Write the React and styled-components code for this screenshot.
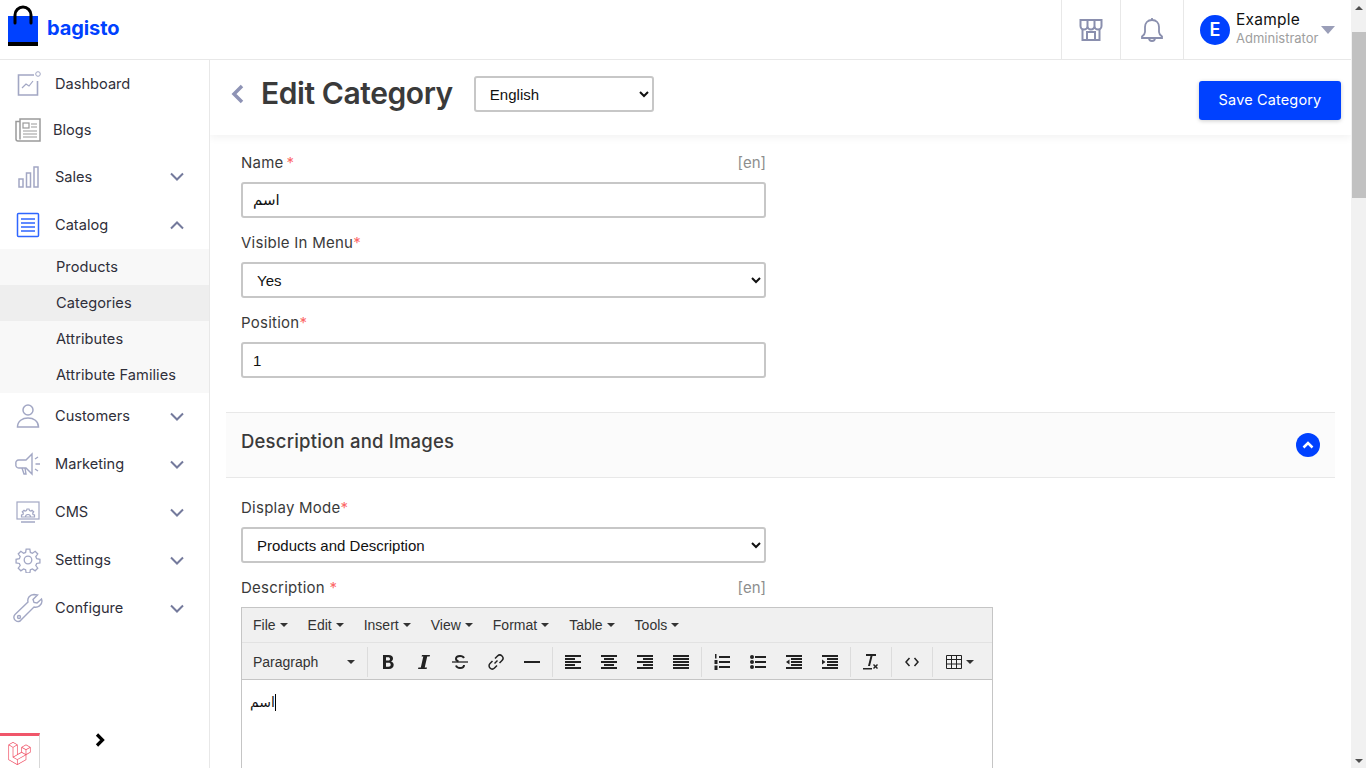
import styled, { createGlobalStyle } from "styled-components";
import { SiLaravel } from "react-icons/si";

const GlobalStyle = createGlobalStyle`
  html, body { margin: 0; height: 100%; overflow: hidden; background: #fff; }
  body { font-family: Inter, "Noto Sans", sans-serif; color: #3a3a3a; }
  * { box-sizing: border-box; }
`;

const Shell = styled.div`
  display: flex;
  width: 1366px;
  height: 768px;
  overflow: hidden;
`;

const Screen = styled.div`
  flex: 1;
  min-width: 0;
  display: flex;
  flex-direction: column;
`;

const TopBar = styled.header`
  height: 60px;
  flex: none;
  display: flex;
  align-items: stretch;
  justify-content: space-between;
  border-bottom: 1px solid #e8e8e8;
`;

const Brand = styled.div`
  display: flex;
  align-items: center;
  gap: 9px;
  padding: 0 0 0 8px;
  margin-top: -9px;
`;

const BrandName = styled.span`
  font-size: 20px;
  font-weight: 700;
  color: #0041ff;
  letter-spacing: -0.1px;
  margin-top: 6px;
`;

const TopActions = styled.div`
  display: flex;
`;

const TopCell = styled.div`
  width: ${(p) => p.$w}px;
  display: flex;
  align-items: center;
  justify-content: center;
  border-left: 1px solid #e8e8e8;
  color: #8a8fae;
`;

const UserCell = styled.div`
  width: 168px;
  display: flex;
  align-items: center;
  padding-left: 16px;
  border-left: 1px solid #e8e8e8;
`;

const Avatar = styled.div`
  width: 30px;
  height: 30px;
  border-radius: 50%;
  background: #0041ff;
  color: #fff;
  font-size: 18px;
  font-weight: 600;
  display: flex;
  align-items: center;
  justify-content: center;
`;

const UserText = styled.div`
  margin-left: 6px;
  width: 85px;
  white-space: nowrap;
`;

const UserName = styled.div`
  font-size: 15.5px;
  line-height: 19px;
  letter-spacing: 0.25px;
  color: #111;
  margin-top: -2px;
`;

const UserRole = styled.div`
  font-size: 13px;
  line-height: 17px;
  margin-top: 1px;
  color: #9e9e9e;
`;

const UserCaret = styled.span`
  width: 0;
  height: 0;
  border-left: 7px solid transparent;
  border-right: 7px solid transparent;
  border-top: 8px solid #9a9eb8;
`;

const Body = styled.div`
  flex: 1;
  min-height: 0;
  display: flex;
`;

const Sidebar = styled.nav`
  width: 210px;
  flex: none;
  display: flex;
  flex-direction: column;
  border-right: 1px solid #e8e8e8;
`;

const NavRow = styled.div`
  height: ${(p) => p.$h || 48}px;
  flex: none;
  display: flex;
  align-items: center;
  padding-left: 13px;
  padding-bottom: ${(p) => (p.$lift ? 2 : 0)}px;
  font-size: 14.6px;
  color: #2f2f3a;
`;

const NavIcon = styled.span`
  width: 30px;
  height: 30px;
  flex: none;
  display: flex;
  align-items: center;
  justify-content: center;
  color: #a2a7c4;
`;

const NavLabel = styled.span`
  margin-left: ${(p) => p.$gap ?? 12}px;
  flex: 1;
`;

const NavChevron = styled.svg`
  width: 14px;
  height: 9px;
  margin-right: 25px;
  color: #747a9c;
`;

const SubMenu = styled.div`
  background: #f8f8f8;
  display: flex;
  flex-direction: column;
`;

const SubItem = styled.div`
  height: 36px;
  display: flex;
  align-items: center;
  padding-left: 56px;
  font-size: 14.6px;
  letter-spacing: 0.05px;
  color: #2f2f3a;
  background: ${(p) => (p.$active ? "#eeeeee" : "transparent")};
`;

const SideFooter = styled.div`
  margin-top: auto;
  height: 35px;
  display: flex;
`;

const LaravelBox = styled.div`
  width: 40px;
  border-top: 3px solid #f0566a;
  border-right: 1px solid #d8d8d8;
  color: #f0566a;
  display: flex;
  align-items: center;
  justify-content: center;
  padding-top: 3px;
`;

const CollapseBox = styled.div`
  width: 120px;
  display: flex;
  justify-content: center;
  color: #000;
`;

const Main = styled.main`
  flex: 1;
  min-width: 0;
  overflow: hidden;
`;

const PageHeader = styled.div`
  height: 75px;
  display: flex;
  justify-content: space-between;
  padding: 16px 10px 0 21px;
  box-shadow: 0 3px 8px rgba(0, 0, 0, 0.05);
`;

const HeaderLeft = styled.div`
  display: flex;
  align-items: flex-start;
`;

const BackLink = styled.svg`
  width: 14px;
  height: 20px;
  margin: 8px 16px 0 0;
  color: #8e93b5;
`;

const Title = styled.h1`
  margin: 0 21px 0 0;
  font-size: 30px;
  line-height: 35px;
  font-weight: 600;
  letter-spacing: -0.42px;
  color: #3a3a3a;
`;

const Field = styled.select`
  display: block;
  width: ${(p) => p.$w || 525}px;
  height: 36px;
  padding: 0 10px;
  background: #fff;
  border: 2px solid #c7c7c7;
  border-radius: 3px;
  font: 15px "Liberation Sans", Arial, sans-serif;
  color: #111;
`;

const TextField = styled.input`
  display: block;
  width: 525px;
  height: 36px;
  padding: 0 10px;
  background: #fff;
  border: 2px solid #c7c7c7;
  border-radius: 3px;
  font: 15px "Liberation Sans", "DejaVu Sans", Arial, sans-serif;
  color: #111;
`;

const SaveButton = styled.button`
  width: 142px;
  height: 39px;
  margin-top: 5px;
  padding-bottom: 4px;
  border: 0;
  border-radius: 3px;
  background: #0041ff;
  color: #fff;
  font: 400 14.5px Inter, sans-serif;
  letter-spacing: 0.15px;
  box-shadow: 0 1px 4px rgba(0, 0, 0, 0.2);
`;

const Form = styled.div`
  padding: 18px 16px 0 16px;
`;

const FieldGroup = styled.div`
  margin: 0 0 15px 15px;
  width: ${(p) => p.$w || 525}px;
`;

const LabelRow = styled.div`
  width: 525px;
  height: 20px;
  margin-bottom: 9px;
  padding-bottom: 2px;
  display: flex;
  justify-content: space-between;
  align-items: center;
  font-size: 15px;
  letter-spacing: 0.25px;
  color: #3a3a3a;
`;

const Star = styled.span`
  color: #fc6868;
  margin-left: ${(p) => p.$gap || 0}px;
`;

const Locale = styled.span`
  color: #8e8e8e;
  letter-spacing: 0;
`;

const SectionHead = styled.div`
  height: 66px;
  margin: 34px 0 20px;
  padding: 0 15px;
  display: flex;
  align-items: center;
  justify-content: space-between;
  background: #fbfbfb;
  border-top: 1px solid #e8e8e8;
  border-bottom: 1px solid #e8e8e8;
`;

const SectionTitle = styled.h2`
  margin: 0 0 8px;
  font-size: 18.5px;
  font-weight: 500;
  letter-spacing: 0.2px;
  color: #3a3a3a;
`;

const Toggle = styled.span`
  width: 24px;
  height: 24px;
  border-radius: 50%;
  background: #0041ff;
  display: flex;
  align-items: center;
  justify-content: center;
`;

const Editor = styled.div`
  width: 752px;
  height: 400px;
  border: 1px solid #c5c5c5;
  font-family: "Liberation Sans", Arial, sans-serif;
  color: #333;
`;

const MenuBar = styled.div`
  height: 35px;
  display: flex;
  align-items: center;
  padding-left: 1px;
  background: #f0f0f0;
  border-bottom: 1px solid #e2e2e2;
`;

const MenuItem = styled.span`
  display: flex;
  align-items: center;
  gap: 4px;
  padding: 0 10px;
  font-size: 14px;
`;

const Caret = styled.i`
  width: 0;
  height: 0;
  border-left: 4px solid transparent;
  border-right: 4px solid transparent;
  border-top: 4px solid #333;
`;

const ToolBar = styled.div`
  height: 37px;
  padding-top: 2px;
  display: flex;
  align-items: center;
  background: #f0f0f0;
  border-bottom: 1px solid #c5c5c5;
`;

const FormatPicker = styled.div`
  width: 123px;
  display: flex;
  align-items: center;
  justify-content: space-between;
  padding: 0 10px 0 11px;
  font-size: 14px;
`;

const ToolSep = styled.span`
  width: 1px;
  height: 30px;
  margin: 0 2px;
  background: #dcdcdc;
`;

const ToolBtn = styled.span`
  width: ${(p) => p.$w || 36}px;
  height: 28px;
  flex: none;
  display: flex;
  align-items: center;
  justify-content: center;
  gap: 4px;
  color: #333;
`;

const EditorText = styled.div`
  padding: 10px 8px;
  font: 14px/24px "Liberation Sans", "DejaVu Sans", sans-serif;
  color: #111;
`;

const TextCursor = styled.span`
  display: inline-block;
  width: 1px;
  height: 17px;
  background: #000;
  vertical-align: -4px;
`;

const ScrollTrack = styled.div`
  width: 15px;
  flex: none;
  display: flex;
  flex-direction: column;
  background: #f1f1f1;
`;

const ScrollArrow = styled.div`
  height: 15px;
  display: flex;
  align-items: center;
  justify-content: center;
  &::after {
    content: "";
    border-left: 4px solid transparent;
    border-right: 4px solid transparent;
    ${(p) => (p.$down ? "border-top: 4px solid #505050;" : "border-bottom: 4px solid #505050;")}
  }
`;

const ScrollThumb = styled.div`
  height: 166px;
  margin: 17px 0 0 1px;
  background: #c1c1c1;
`;

const ScrollSpace = styled.div`
  flex: 1;
`;

const Line = ({ d, w = 1.5 }) => <path d={d} fill="none" stroke="currentColor" strokeWidth={w} />;

const BagLogo = () => (
  <svg width="30" height="41" viewBox="0 0 30 41">
    <rect x="0" y="11" width="30" height="30" fill="#0041ff" />
    <rect x="0" y="37" width="30" height="4" fill="#000" />
    <path d="M7 18V10a8 8 0 0 1 16 0v8" fill="none" stroke="#000" strokeWidth="3" strokeLinecap="round" />
  </svg>
);

const icons = {
  dashboard: (
    <svg width="26" height="26" viewBox="0 0 26 26">
      <Line d="M19 4H3.500v20h19V10" w={1.6} />
      <circle cx="23" cy="3" r="2.300" fill="none" stroke="currentColor" />
      <Line d="M7 17l4-4 3 2 4-5" w={1.200} />
    </svg>
  ),
  blogs: (
    <svg width="26" height="26" viewBox="0 0 26 26" stroke="#9a9a9a" fill="none">
      <path d="M5 4.500V2h20v22H3a2 2 0 0 1-2-2V4.500h4v18" strokeWidth="1.500" />
      <rect x="8" y="6" width="6" height="5" strokeWidth="1.200" />
      <path d="M16 7h6M16 10h6M8 14h14M8 17h14M8 20h14" strokeWidth="1.200" />
    </svg>
  ),
  sales: (
    <svg width="24" height="24" viewBox="0 0 24 24" fill="none" stroke="currentColor" strokeWidth="1.500">
      <rect x="3" y="14" width="4" height="8" />
      <rect x="10.500" y="8" width="4" height="14" />
      <rect x="18" y="2" width="4" height="20" />
    </svg>
  ),
  catalog: (
    <svg width="24" height="26" viewBox="0 0 24 26" fill="none" stroke="#2f66ff" strokeWidth="1.500">
      <rect x="1.500" y="1.500" width="21" height="23" rx="1" />
      <path d="M5 7h14M5 11h14M5 15h14M5 19h14" />
    </svg>
  ),
  customers: (
    <svg width="24" height="26" viewBox="0 0 24 26" fill="none" stroke="currentColor" strokeWidth="1.500">
      <circle cx="12" cy="7" r="5" />
      <path d="M1.500 24c0-6 5-9 10.500-9s10.500 3 10.500 9z" />
    </svg>
  ),
  marketing: (
    <svg width="26" height="24" viewBox="0 0 26 24" fill="none" stroke="currentColor" strokeWidth="1.400">
      <path d="M4 8h7l6-6v20l-6-6H4a3 3 0 0 1-3-4 3 3 0 0 1 3-4z" />
      <path d="M7 16l2 6h2l-1-6M20 7l3-2M20.500 12H25M20 17l3 2" />
    </svg>
  ),
  cms: (
    <svg width="24" height="24" viewBox="0 0 24 24" fill="none" stroke="currentColor" strokeWidth="1.200">
      <rect x="1" y="2" width="22" height="17" />
      <path d="M5 22h14" strokeWidth="1.500" />
      <path d="M5.500 17v-2l1.500-.5.300-1.500-1-1.200 1.700-1.500 1.200.8 1.300-.6.500-1.500h2l.5 1.500 1.300.6 1.200-.8 1.700 1.500-1 1.200.3 1.500 1.500.5v2z" />
      <path d="M9.500 17a2.500 2.500 0 0 1 5 0" />
    </svg>
  ),
  settings: (
    <svg width="26" height="26" viewBox="0 0 24 24" fill="none" stroke="currentColor" strokeWidth="1.200">
      <circle cx="12" cy="12" r="3.500" />
      <path d="M10.300 2h3.400l.5 3 1.900.8 2.500-1.800 2.400 2.400-1.800 2.500.8 1.900 3 .5v3.400l-3 .5-.8 1.900 1.800 2.500-2.400 2.400-2.500-1.800-1.900.8-.5 3h-3.400l-.5-3-1.900-.8-2.500 1.800-2.400-2.400 1.800-2.500-.8-1.900-3-.5v-3.400l3-.5.8-1.900-1.800-2.500 2.400-2.400 2.500 1.800 1.900-.8z" />
    </svg>
  ),
  configure: (
    <svg width="30" height="30" viewBox="0 0 30 30" fill="none" stroke="currentColor" strokeWidth="1.400">
      <path d="M21 1.500c-4 0-7 3.500-6 7.500L2 21.500c-2 2-1 5 .5 6s4 1.500 5.500-.5L21 14c4 1 8-2 8-6l-.5-2-4.500 4-3-.5-1-3 4.500-4.500z" />
      <circle cx="6" cy="24" r="1.500" />
    </svg>
  ),
};

const Down = () => (
  <NavChevron viewBox="0 0 14 9">
    <path d="M1 1.500l6 6 6-6" fill="none" stroke="currentColor" strokeWidth="2" />
  </NavChevron>
);

const Up = () => (
  <NavChevron viewBox="0 0 14 9">
    <path d="M1 7.500l6-6 6 6" fill="none" stroke="currentColor" strokeWidth="2" />
  </NavChevron>
);

const Item = ({ icon, label, h, gap, chevron, lift }) => (
  <NavRow $h={h} $lift={lift}>
    <NavIcon>{icons[icon]}</NavIcon>
    <NavLabel $gap={gap}>{label}</NavLabel>
    {chevron === "down" && <Down />}
    {chevron === "up" && <Up />}
  </NavRow>
);

const Bars = ({ rows }) => (
  <svg width="16" height="14" viewBox="0 0 16 14" fill="#222">
    {rows.map(([x, w], i) => (
      <rect key={i} x={x} y={i * 3} width={w} height="2" />
    ))}
  </svg>
);

const tools = {
  bold: (
    <svg width="12" height="14" viewBox="0 0 12 14">
      <path d="M1 0h5.500c3 0 4.500 1.300 4.500 3.500 0 1.300-.7 2.400-2 2.900 1.700.4 2.700 1.600 2.700 3.400C11.700 12.500 10 14 6.800 14H1zM4 2.300v3.300h2c1.300 0 2-.6 2-1.700s-.7-1.600-2-1.600zM4 7.800v3.900h2.500c1.400 0 2.200-.7 2.200-2s-.8-1.900-2.200-1.900z" fill="#222" fillRule="evenodd" />
    </svg>
  ),
  italic: (
    <svg width="12" height="14" viewBox="0 0 12 14">
      <path d="M4 0h8l-.4 1.600H9.200L6.700 12.400H9L8.600 14H0l.4-1.600h2.400L5.300 1.600H3.600z" fill="#222" />
    </svg>
  ),
  strike: (
    <svg width="16" height="14" viewBox="0 0 16 14" fill="none" stroke="#222">
      <path d="M0 7h16" strokeWidth="1.300" />
      <path d="M12 3c-.6-1.300-2-2-4-2-2.500 0-4 1.100-4 2.800 0 1.300.9 2.200 2.500 2.700M4 10.500c.6 1.600 2 2.500 4 2.500 2.500 0 4-1.200 4-3" strokeWidth="2" />
    </svg>
  ),
  link: (
    <svg width="16" height="16" viewBox="0 0 16 16" fill="none" stroke="#222" strokeWidth="1.500">
      <path d="M6.500 9.500l3-3" />
      <path d="M7 4.500l2.500-2.500a2.500 2.500 0 0 1 4.500 4.500L11.500 9" />
      <path d="M9 11.500L6.500 14A2.500 2.500 0 0 1 2 9.500L4.500 7" />
    </svg>
  ),
  hr: (
    <svg width="16" height="14" viewBox="0 0 16 14"><rect y="6" width="16" height="2" fill="#222" /></svg>
  ),
  ol: (
    <svg width="16" height="16" viewBox="0 0 16 16" fill="#222">
      <rect x="5" y="2" width="11" height="2" />
      <rect x="5" y="7" width="11" height="2" />
      <rect x="5" y="12" width="11" height="2" />
      <rect x="1" y="0" width="1.500" height="4.500" />
      <rect x="0.500" y="6" width="3" height="4" />
      <rect x="0.500" y="11.500" width="3" height="4.500" />
    </svg>
  ),
  ul: (
    <svg width="16" height="16" viewBox="0 0 16 16" fill="#222">
      <rect x="5" y="2" width="11" height="2" />
      <rect x="5" y="7" width="11" height="2" />
      <rect x="5" y="12" width="11" height="2" />
      <circle cx="2" cy="3" r="2" />
      <circle cx="2" cy="8" r="2" />
      <circle cx="2" cy="13" r="2" />
    </svg>
  ),
  outdent: (
    <svg width="16" height="14" viewBox="0 0 16 14" fill="#222">
      <rect width="16" height="2" />
      <rect x="5" y="3" width="11" height="2" />
      <rect x="5" y="6" width="11" height="2" />
      <rect x="5" y="9" width="11" height="2" />
      <rect y="12" width="16" height="2" />
      <path d="M3.500 4.500v5L0 7z" />
    </svg>
  ),
  indent: (
    <svg width="16" height="14" viewBox="0 0 16 14" fill="#222">
      <rect width="16" height="2" />
      <rect x="5" y="3" width="11" height="2" />
      <rect x="5" y="6" width="11" height="2" />
      <rect x="5" y="9" width="11" height="2" />
      <rect y="12" width="16" height="2" />
      <path d="M0 4.500v5L3.500 7z" />
    </svg>
  ),
  clear: (
    <svg width="16" height="16" viewBox="0 0 16 16" fill="#222">
      <path d="M3 0h10v2H9.500L7 12H5L7.500 2H3z" />
      <rect x="0" y="14" width="9" height="1.500" />
      <path d="M10 11l1-1 1.500 1.500L14 10l1 1-1.500 1.500L15 14l-1 1-1.500-1.500L11 15l-1-1 1.500-1.500z" />
    </svg>
  ),
  code: (
    <svg width="14" height="10" viewBox="0 0 14 10" fill="none" stroke="#222" strokeWidth="1.500">
      <path d="M4.500 1L1 5l3.500 4M9.500 1L13 5l-3.500 4" />
    </svg>
  ),
  table: (
    <svg width="16" height="14" viewBox="0 0 16 14" fill="none" stroke="#222">
      <path d="M.5.500h15v13H.5zM.5 4.500h15M.5 9h15M5.500.5v13M10.500.5v13" />
    </svg>
  ),
};

const aligns = {
  left: [[0, 16], [0, 10], [0, 16], [0, 10], [0, 16]],
  center: [[0, 16], [3, 10], [0, 16], [3, 10], [0, 16]],
  right: [[0, 16], [6, 10], [0, 16], [6, 10], [0, 16]],
  justify: [[0, 16], [0, 16], [0, 16], [0, 16], [0, 16]],
};

const menus = ["File", "Edit", "Insert", "View", "Format", "Table", "Tools"];

export default function App() {
  return (
    <>
      <GlobalStyle />
      <Shell>
        <Screen>
          <TopBar>
            <Brand>
              <BagLogo />
              <BrandName>bagisto</BrandName>
            </Brand>
            <TopActions>
              <TopCell $w={59}>
                <svg width="24" height="24" viewBox="0 0 24 24" fill="none" stroke="currentColor" strokeWidth="2">
                  <path d="M3.500 11v11h17V11" />
                  <path d="M1.500 2h21v6a3.500 3.500 0 0 1-7 0 3.500 3.500 0 0 1-7 0 3.500 3.500 0 0 1-7 0zM8.500 2v6M15.500 2v6" />
                  <path d="M8 22v-8h8v8" />
                </svg>
              </TopCell>
              <TopCell $w={63}>
                <svg width="24" height="26" viewBox="0 0 24 26" fill="none" stroke="currentColor" strokeWidth="1.800">
                  <path d="M12 3c-4.500 0-7 3-7 7v5c0 2-1 3-3 4.500V21h20v-1.500c-2-1.500-3-2.500-3-4.500v-5c0-4-2.500-7-7-7z" />
                  <path d="M12 1v2M9 21a3 3 0 0 0 6 0" />
                </svg>
              </TopCell>
              <UserCell>
                <Avatar>E</Avatar>
                <UserText>
                  <UserName>Example</UserName>
                  <UserRole>Administrator</UserRole>
                </UserText>
                <UserCaret />
              </UserCell>
            </TopActions>
          </TopBar>
          <Body>
            <Sidebar>
              <Item icon="dashboard" label="Dashboard" h={47} />
              <Item icon="blogs" label="Blogs" h={45} gap={10} />
              <Item icon="sales" label="Sales" h={49} chevron="down" />
              <Item icon="catalog" label="Catalog" chevron="up" />
              <SubMenu>
                <SubItem>Products</SubItem>
                <SubItem $active>Categories</SubItem>
                <SubItem>Attributes</SubItem>
                <SubItem>Attribute Families</SubItem>
              </SubMenu>
              <Item lift icon="customers" label="Customers" chevron="down" />
              <Item lift icon="marketing" label="Marketing" chevron="down" />
              <Item lift icon="cms" label="CMS" chevron="down" />
              <Item lift icon="settings" label="Settings" chevron="down" />
              <Item lift icon="configure" label="Configure" chevron="down" />
              <SideFooter>
                <LaravelBox>
                  <SiLaravel size={23} />
                </LaravelBox>
                <CollapseBox>
                  <svg width="12" height="14" viewBox="0 0 12 14">
                    <path d="M3 1.500l5.500 5.500L3 12.500" fill="none" stroke="currentColor" strokeWidth="3.200" />
                  </svg>
                </CollapseBox>
              </SideFooter>
            </Sidebar>
            <Main>
              <PageHeader>
                <HeaderLeft>
                  <BackLink viewBox="0 0 14 20">
                    <path d="M11 2L3 10l8 8" fill="none" stroke="currentColor" strokeWidth="3.500" />
                  </BackLink>
                  <Title>Edit Category</Title>
                  <Field $w={180}>
                    <option>English</option>
                  </Field>
                </HeaderLeft>
                <SaveButton>Save Category</SaveButton>
              </PageHeader>
              <Form>
                <FieldGroup>
                  <LabelRow>
                    <span>
                      Name<Star $gap={3}>*</Star>
                    </span>
                    <Locale>[en]</Locale>
                  </LabelRow>
                  <TextField defaultValue="اسم" />
                </FieldGroup>
                <FieldGroup>
                  <LabelRow>
                    <span>
                      Visible In Menu<Star>*</Star>
                    </span>
                  </LabelRow>
                  <Field>
                    <option>Yes</option>
                  </Field>
                </FieldGroup>
                <FieldGroup>
                  <LabelRow>
                    <span>
                      Position<Star>*</Star>
                    </span>
                  </LabelRow>
                  <TextField defaultValue="1" />
                </FieldGroup>
                <SectionHead>
                  <SectionTitle>Description and Images</SectionTitle>
                  <Toggle>
                    <svg width="12" height="8" viewBox="0 0 12 8">
                      <path d="M1.500 6.500L6 2l4.500 4.500" fill="none" stroke="#fff" strokeWidth="2.500" />
                    </svg>
                  </Toggle>
                </SectionHead>
                <FieldGroup>
                  <LabelRow>
                    <span>
                      Display Mode<Star>*</Star>
                    </span>
                  </LabelRow>
                  <Field>
                    <option>Products and Description</option>
                  </Field>
                </FieldGroup>
                <FieldGroup $w={752}>
                  <LabelRow>
                    <span>
                      Description <Star>*</Star>
                    </span>
                    <Locale>[en]</Locale>
                  </LabelRow>
                  <Editor>
                    <MenuBar>
                      {menus.map((m) => (
                        <MenuItem key={m}>
                          {m}
                          <Caret />
                        </MenuItem>
                      ))}
                    </MenuBar>
                    <ToolBar>
                      <FormatPicker>
                        Paragraph
                        <Caret />
                      </FormatPicker>
                      <ToolSep />
                      <ToolBtn>{tools.bold}</ToolBtn>
                      <ToolBtn>{tools.italic}</ToolBtn>
                      <ToolBtn>{tools.strike}</ToolBtn>
                      <ToolBtn>{tools.link}</ToolBtn>
                      <ToolBtn>{tools.hr}</ToolBtn>
                      <ToolSep />
                      {Object.keys(aligns).map((k) => (
                        <ToolBtn key={k}>
                          <Bars rows={aligns[k]} />
                        </ToolBtn>
                      ))}
                      <ToolSep />
                      <ToolBtn>{tools.ol}</ToolBtn>
                      <ToolBtn>{tools.ul}</ToolBtn>
                      <ToolBtn>{tools.outdent}</ToolBtn>
                      <ToolBtn>{tools.indent}</ToolBtn>
                      <ToolSep />
                      <ToolBtn>{tools.clear}</ToolBtn>
                      <ToolSep />
                      <ToolBtn>{tools.code}</ToolBtn>
                      <ToolSep />
                      <ToolBtn $w={50}>
                        {tools.table}
                        <Caret />
                      </ToolBtn>
                    </ToolBar>
                    <EditorText>
                      اسم
                      <TextCursor />
                    </EditorText>
                  </Editor>
                </FieldGroup>
              </Form>
            </Main>
          </Body>
        </Screen>
        <ScrollTrack>
          <ScrollArrow />
          <ScrollThumb />
          <ScrollSpace />
          <ScrollArrow $down />
        </ScrollTrack>
      </Shell>
    </>
  );
}
